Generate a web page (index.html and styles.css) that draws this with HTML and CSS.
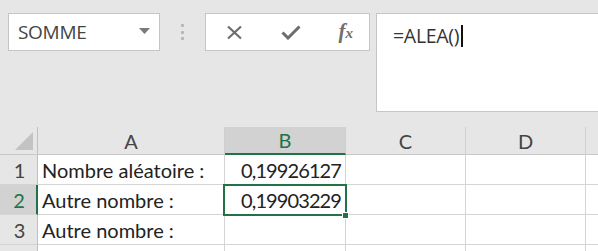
FILE: index.html
```html
<!DOCTYPE html>
<html lang="fr">
<head>
<meta charset="utf-8">
<title>Excel ALEA</title>
<link rel="stylesheet" href="styles.css">
</head>
<body>
<div class="toolbar">
  <div class="namebox">
    <span class="name">SOMME</span>
    <svg class="drop" width="11" height="6" viewBox="0 0 11 6"><polygon points="0,0 11,0 5.5,6" fill="#7a7a7a"/></svg>
  </div>
  <div class="grip">
    <span class="dot"></span><span class="dot"></span><span class="dot"></span>
  </div>
  <div class="buttons">
    <svg class="ico" width="17" height="15" viewBox="0 0 17 15"><path d="M2 1.5 L15 13.5 M15 1.5 L2 13.5" stroke="#6d6d6d" stroke-width="2.2" fill="none"/></svg>
    <svg class="ico" width="20" height="15" viewBox="0 0 20 15"><path d="M1.5 7.5 L7 13 L18.5 1.5" stroke="#6d6d6d" stroke-width="3" fill="none"/></svg>
    <span class="fx"><i>f</i><i class="x">x</i></span>
  </div>
  <div class="formula">
    <span class="ftext">=ALEA()</span><span class="caret"></span>
  </div>
</div>
<div class="grid">
  <div class="hd corner"><svg width="19" height="19" viewBox="0 0 19 19"><polygon points="18,0 18,18 0,18" fill="#c3c3c3"/></svg></div>
  <div class="hd col">A</div>
  <div class="hd col sel-col">B</div>
  <div class="hd col">C</div>
  <div class="hd col">D</div>
  <div class="hd col last"></div>

  <div class="hd row">1</div>
  <div class="cell">Nombre aléatoire :</div>
  <div class="cell num">0,19926127</div>
  <div class="cell"></div>
  <div class="cell"></div>
  <div class="cell last"></div>

  <div class="hd row sel-row">2</div>
  <div class="cell">Autre nombre :</div>
  <div class="cell num active">0,19903229<span class="selbox"></span><span class="handle"></span></div>
  <div class="cell"></div>
  <div class="cell"></div>
  <div class="cell last"></div>

  <div class="hd row">3</div>
  <div class="cell">Autre nombre :</div>
  <div class="cell"></div>
  <div class="cell"></div>
  <div class="cell"></div>
  <div class="cell last"></div>

  <div class="hd row tail"></div>
  <div class="cell tail"></div>
  <div class="cell tail"></div>
  <div class="cell tail"></div>
  <div class="cell tail"></div>
  <div class="cell last tail"></div>
</div>
</body>
</html>
```
FILE: styles.css
```css
html, body {
  margin: 0;
  padding: 0;
  background: #e6e6e6;
  overflow: hidden;
}
body {
  width: 598px;
  height: 251px;
}
.toolbar {
  display: flex;
  align-items: flex-start;
  height: 127px;
  padding: 13px 0 0 8px;
  box-sizing: border-box;
  font-family: "Open Sans", "Noto Sans", sans-serif;
}
.namebox {
  width: 152px;
  height: 38px;
  box-sizing: border-box;
  background: #fff;
  border: 1px solid #c6c6c6;
  display: flex;
  align-items: center;
  justify-content: space-between;
  padding: 0 9px 0 9px;
}
.name {
  font-size: 19px;
  color: #444;
  letter-spacing: -0.3px;
}
.drop { margin-top: -2px; }
.grip {
  width: 45px;
  height: 38px;
  display: flex;
  flex-direction: column;
  align-items: center;
  justify-content: center;
  gap: 3.5px;
}
.dot {
  width: 3px;
  height: 3px;
  background: #b5b5b5;
  border-radius: 1px;
}
.buttons {
  width: 165px;
  height: 38px;
  box-sizing: border-box;
  background: #fff;
  border: 1px solid #c6c6c6;
  display: flex;
  align-items: center;
  padding: 0 16px 0 20px;
  justify-content: space-between;
}
.fx {
  font-family: "Liberation Serif", "DejaVu Serif", serif;
  color: #707070;
  font-size: 21px;
  font-weight: bold;
  line-height: 1;
  margin-top: -2px;
}
.fx .x {
  font-size: 15px;
  margin-left: 0px;
}
.formula {
  flex: 1;
  height: 99px;
  margin-left: 6px;
  box-sizing: border-box;
  background: #fff;
  border: 1px solid #c6c6c6;
  border-right: none;
  padding: 9px 0 0 16px;
  display: flex;
  align-items: flex-start;
}
.ftext {
  font-size: 19.5px;
  color: #333;
  line-height: 26px;
  letter-spacing: -0.3px;
}
.caret {
  width: 1.5px;
  height: 22px;
  background: #111;
  margin: 2px 0 0 2px;
}
.grid {
  display: grid;
  grid-template-columns: 38px 187px 121px 120px 120px 1fr;
  grid-template-rows: 28px 30px 30px 30px 6px;
  font-family: "Lato", "Carlito", sans-serif;
  font-size: 20px;
  color: #222;
}
.hd {
  background: #e6e6e6;
  color: #444;
  box-sizing: border-box;
  border-right: 1px solid #cfcfcf;
  border-bottom: 1px solid #c8c8c8;
  display: flex;
  align-items: center;
  justify-content: center;
}
.corner {
  border-right: 1px solid #bfbfbf;
  align-items: flex-end;
  justify-content: flex-end;
  padding: 0 3px 3px 0;
}
.col { font-size: 20px; }
.col.last { border-right: none; }
.sel-col {
  background: #d2d2d2;
  color: #217346;
  border-bottom: 2px solid #217346;
}
.row {
  border-right: 1px solid #bfbfbf;
  border-bottom: 1px solid #d4d4d4;
  font-size: 20px;
  padding-left: 2px;
}
.sel-row {
  background: #d2d2d2;
  color: #217346;
  border-right: 2px solid #217346;
}
.cell {
  background: #fff;
  box-sizing: border-box;
  border-right: 1px solid #d4d4d4;
  border-bottom: 1px solid #d4d4d4;
  display: flex;
  align-items: center;
  padding: 0 4px;
  white-space: nowrap;
}
.cell.last { border-right: none; }
.tail { border-bottom: none; }
.num {
  justify-content: flex-end;
  padding-right: 4px;
  letter-spacing: -0.9px;
}
.active { position: relative; }
.selbox {
  position: absolute;
  left: -2px;
  top: -1px;
  right: -2px;
  bottom: -2px;
  border: 2px solid #217346;
}
.handle {
  position: absolute;
  right: -4px;
  bottom: -5px;
  width: 7px;
  height: 7px;
  background: #217346;
  border: 1px solid #fff;
  box-sizing: border-box;
}
```
